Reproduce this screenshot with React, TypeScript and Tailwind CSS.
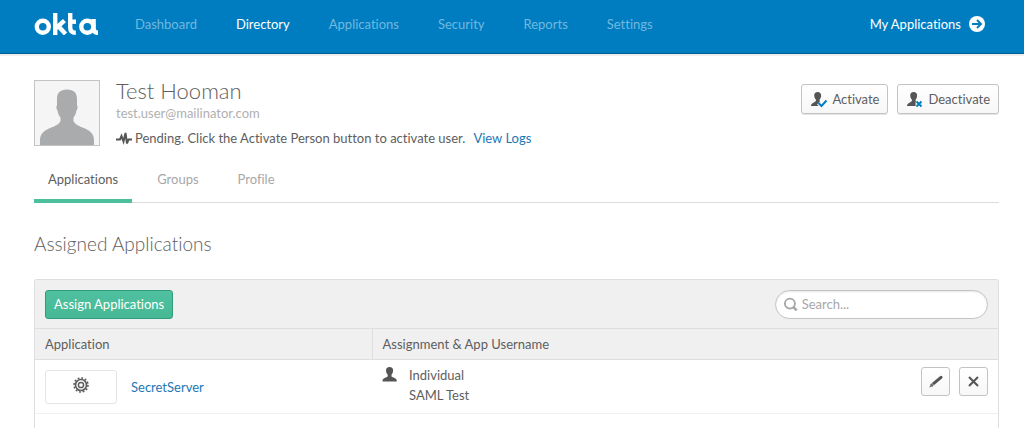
import React from "react";

const navItems = ["Dashboard", "Directory", "Applications", "Security", "Reports", "Settings"];
const tabs = ["Applications", "Groups", "Profile"];

function Logo() {
  return (
    <svg width="65" height="22" viewBox="0 0 65 22" fill="none" stroke="#fff" strokeWidth="4.4" role="img" aria-label="okta">
      <circle cx="8.800" cy="13.800" r="6" />
      <line x1="21.200" y1="0" x2="21.200" y2="22" />
      <line x1="22" y1="15" x2="30.500" y2="7.600" />
      <line x1="24" y1="12.800" x2="31.500" y2="21" />
      <path d="M36.200 0v14.500q0 5.300 5.600 5.300" />
      <line x1="36.200" y1="8.700" x2="42" y2="8.700" />
      <circle cx="53.300" cy="13.800" r="6" />
      <path d="M59.600 6v9.500q0 4.300 4.400 4.400" />
    </svg>
  );
}

function Person({ className = "" }: { className?: string }) {
  return (
    <svg className={className} width="16" height="15" viewBox="0 0 16 15" fill="#555" aria-hidden="true">
      <path d="M7.600 0c2.300 0 3.500 1.300 3.500 3.300 0 1.800-.5 3.400-1.600 4.500v1.700c1 1 5.300 1.300 5.300 4.500v.5H.5V14c0-3.200 4.200-3.500 5.200-4.500V7.800C4.600 6.700 4 5.100 4 3.300 4 1.300 5.200 0 7.600 0z" />
    </svg>
  );
}

function ActionButton({ label, mark }: { label: string; mark: string }) {
  return (
    <button
      type="button"
      className="flex h-[30px] items-center gap-1 rounded-[3px] border border-[#c3c3c3] bg-linear-to-b from-white to-[#f7f7f7] px-2 text-[13px] text-[#5e5e5e] shadow-[0_1px_0_#e4e4e4]"
    >
      <svg width="18" height="17" viewBox="0 0 18 17" aria-hidden="true">
        <path
          fill="#555"
          d="M7.600 1c2.300 0 3.500 1.300 3.500 3.300 0 1.800-.5 3.300-1.500 4.300v1.500l3.500 4.900H1C1 12 4.700 11.800 5.900 10V8.600C4.800 7.600 4.200 6.100 4.200 4.300 4.200 2.300 5.400 1 7.600 1z"
        />
        <path d={mark} fill="none" stroke="#fff" strokeWidth="4" />
        <path d={mark} fill="none" stroke="#007dc1" strokeWidth="2" />
      </svg>
      {label}
    </button>
  );
}

export default function App() {
  return (
    <div className="flex min-h-screen flex-col bg-white font-['Lato','Liberation_Sans',sans-serif] text-[13px] leading-5 text-[#5e5e5e] [font-variant-ligatures:none]">
      <header className="flex h-[54px] items-center border-b border-[#00608f] bg-[#007dc1] pr-[39px] pb-[6px] pl-[34px] shadow-[0_2px_0_#efefef]">
        <a href="#home" className="mr-9 block">
          <Logo />
        </a>
        <nav className="flex gap-[39px]">
          {navItems.map((item) => (
            <a key={item} href={`#${item}`} className={item === "Directory" ? "text-white" : "text-[#71b8de]"}>
              {item}
            </a>
          ))}
        </nav>
        <a href="#my-applications" className="ml-auto flex items-center gap-2 text-white">
          My Applications
          <svg width="16" height="16" viewBox="0 0 16 16" aria-hidden="true">
            <circle cx="8" cy="8" r="8" fill="#fff" />
            <path d="M3 8h8.500M8 4l4 4-4 4" fill="none" stroke="#007dc1" strokeWidth="2" />
          </svg>
        </a>
      </header>

      <main className="flex flex-1 flex-col pr-[25px] pl-[34px]">
        <section className="mt-[25px] flex items-start">
          <svg width="66" height="67" viewBox="0 0 66 67" className="mt-px mr-4" role="img" aria-label="Test Hooman">
            <rect x=".5" y=".5" width="65" height="65" fill="#f5f5f5" stroke="#c4c4c4" />
            <path
              fill="#a9abad"
              d="M33 9.500c7 0 10 3.500 10 9.500v6.500c1 .5.700 4-.5 5-.4 3-1.500 5-3 7v3.500c1 3 5 5 11.500 7.500 6.500 3 9 6.500 9 12V65H6v-4.500c0-5.500 2.500-9 9-12 6.500-2.500 10.500-4.500 11.500-7.500V37.500c-1.500-2-2.600-4-3-7-1.200-1-1.500-4.500-.5-5V19c0-6 3-9.500 10-9.500z"
            />
          </svg>
          <div className="flex-1">
            <h1 className="text-[22px] leading-6 font-light">Test Hooman</h1>
            <p className="text-[#b0b0b0]">test.user@mailinator.com</p>
            <p className="mt-[5px] flex items-center">
              <svg width="16" height="13" viewBox="0 0 16 13" className="mr-[3px]" fill="none" stroke="#555" aria-hidden="true">
                <path d="M0 7.500h4L5.500 4l2 5.500L9.500 1l1.500 10.500 1.500-4H16" strokeWidth="2" />
              </svg>
              Pending. Click the Activate Person button to activate user.
              <a href="#logs" className="ml-2 text-[#2277b5]">
                View Logs
              </a>
            </p>
          </div>
          <div className="mt-[5px] flex gap-[9px]">
            <ActionButton label="Activate" mark="M8.500 12l3 3 5-5.500" />
            <ActionButton label="Deactivate" mark="M10.500 10.500l5 5M15.500 10.500l-5 5" />
          </div>
        </section>

        <nav className="mt-[11px] flex gap-[11px] border-b border-[#dcdcdc]">
          {tabs.map((tab, i) => (
            <a
              key={tab}
              href={`#tab-${tab}`}
              className={
                i === 0
                  ? "-mb-px border-b-4 border-[#4cbf9c] px-[14px] py-[10px]"
                  : "px-[14px] py-[10px] text-[#a7a7a7]"
              }
            >
              {tab}
            </a>
          ))}
        </nav>

        <h2 className="mt-[29px] mb-[23px] text-[19px] leading-6 font-light">Assigned Applications</h2>

        <section className="flex-1 rounded-t-[3px] border border-b-0 border-[#dedede]">
          <div className="flex h-[49px] items-center justify-between border-b border-[#dedede] bg-[#f0f0f0] px-[10px]">
            <button
              type="button"
              className="h-[29px] rounded-[3px] border border-[#329b7b] bg-linear-to-b from-[#4fc1a0] to-[#46b894] px-2 text-[13px] text-white"
            >
              Assign Applications
            </button>
            <label className="flex h-[29px] w-[213px] items-center gap-1 rounded-full border border-[#c3c3c3] bg-white px-2 shadow-[inset_0_1px_2px_#e8e8e8]">
              <svg width="15" height="15" viewBox="0 0 15 15" fill="none" stroke="#a5a5a5" aria-hidden="true">
                <circle cx="6.500" cy="6.500" r="5.500" strokeWidth="2" />
                <path d="M10.300 10.300l3.700 3.700" strokeWidth="2.600" />
              </svg>
              <input
                type="search"
                aria-label="Search"
                placeholder="Search..."
                className="w-full min-w-0 bg-transparent text-[13px] outline-none placeholder:text-[#a7a7a7]"
              />
            </label>
          </div>
          <table className="w-full table-fixed border-collapse text-left">
            <thead className="bg-[#f0f0f0]">
              <tr className="h-[30px] border-b border-[#dedede]">
                <th className="w-[35%] border-r border-[#dedede] px-[10px] font-normal">Application</th>
                <th className="px-[10px] font-normal">Assignment &amp; App Username</th>
                <th className="w-[100px]" aria-label="Actions" />
              </tr>
            </thead>
            <tbody>
              <tr className="border-b border-[#f0f0f0]">
                <td className="px-[10px] pt-[10px] pb-[9px] align-top">
                  <div className="flex items-center gap-[14px]">
                    <span className="flex h-[34px] w-[72px] justify-center rounded-[3px] border border-[#e5e5e5] pt-[6px]">
                      <svg width="16" height="16" viewBox="0 0 16 16" fill="none" stroke="#606060" aria-hidden="true">
                        <circle cx="8" cy="8" r="7" strokeWidth="1.6" strokeDasharray="1.9 1.765" />
                        <circle cx="8" cy="8" r="5.500" strokeWidth="1.7" />
                        <circle cx="8" cy="8" r="2.600" strokeWidth="1.5" />
                      </svg>
                    </span>
                    <a href="#secretserver" className="text-[#2277b5]">
                      SecretServer
                    </a>
                  </div>
                </td>
                <td className="px-[10px] pt-[5px] align-top">
                  <div className="flex gap-[11px]">
                    <Person className="mt-[2px]" />
                    <div>
                      <p>Individual</p>
                      <p>SAML Test</p>
                    </div>
                  </div>
                </td>
                <td className="px-[10px] pt-[7px] align-top">
                  <div className="flex justify-end gap-[9px]">
                    <button
                      type="button"
                      aria-label="Edit"
                      className="flex size-[29px] items-center justify-center rounded-[3px] border border-[#c3c3c3] bg-linear-to-b from-white to-[#f7f7f7]"
                    >
                      <svg width="14" height="13" viewBox="0 0 14 13" aria-hidden="true">
                        <path d="M3.300 9.700L12 2.300" stroke="#555" strokeWidth="3" strokeLinecap="round" />
                        <path d="M1.800 8.800l2.300 2.500L.3 12.500z" fill="#777" />
                        <path d="M2.600 8l2.400 2.700" stroke="#fff" strokeWidth=".6" />
                      </svg>
                    </button>
                    <button
                      type="button"
                      aria-label="Remove"
                      className="flex size-[29px] items-center justify-center rounded-[3px] border border-[#c3c3c3] bg-linear-to-b from-white to-[#f7f7f7]"
                    >
                      <svg width="11" height="11" viewBox="0 0 11 11" stroke="#555" strokeWidth="2" aria-hidden="true">
                        <path d="M1 1l9 9M10 1l-9 9" />
                      </svg>
                    </button>
                  </div>
                </td>
              </tr>
            </tbody>
          </table>
        </section>
      </main>
    </div>
  );
}
